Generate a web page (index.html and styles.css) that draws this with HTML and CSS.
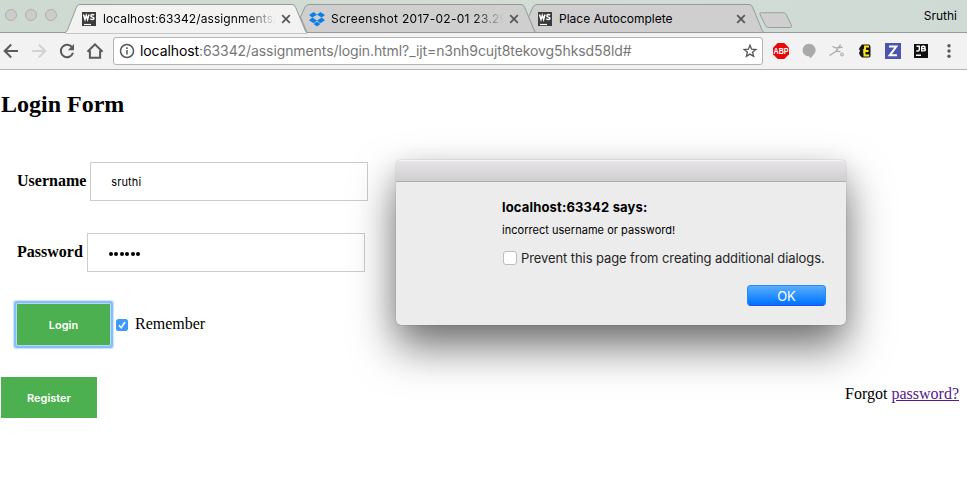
FILE: index.html
```html
<!DOCTYPE html>
<html lang="en">
<head>
<meta charset="utf-8">
<title>Login Form</title>
<link rel="stylesheet" href="styles.css">
</head>
<body>
<div class="window">
  <header class="tabstrip">
    <div class="lights"><i></i><i></i><i></i></div>
    <div class="tabs">
      <div class="tab active">
        <svg class="shape" viewBox="0 0 242 29"><path d="M0 28.5C1.500 28 2 27 2.500 26L11.500 3Q12.500.5 15 .5H227Q229.500.5 230.500 3L240 26Q241 28.500 242 28.500V29H0Z"/></svg>
        <svg class="fav ws" viewBox="0 0 14 14"><rect width="14" height="14" fill="#3b3b3b"/><path d="M1.500 2.500L3 7.500L4.300 3.500L5.600 7.500L7 2.500M12 3.200C10.500 2 8.600 2.700 8.900 4.100C9.200 5.400 12 4.900 11.900 6.400C11.800 7.900 9.600 7.900 8.300 6.800" stroke="#fff" stroke-width="1.500" fill="none"/><path d="M2 12.500h7" stroke="#fff" stroke-width="1.200"/></svg>
        <span class="title t1">localhost:63342/assignments/</span>
        <svg class="close" viewBox="0 0 10 10"><path d="M1.200 1.200L8.800 8.800M8.800 1.200L1.200 8.800"/></svg>
      </div>
      <div class="tab second">
        <svg class="shape" viewBox="0 0 242 29"><path d="M6.500 13L11 3Q12.500.5 15 .5H227Q229.500.5 230.500 3L240 26Q241 28.500 242 28.500H13Z"/></svg>
        <svg class="fav box" viewBox="0 0 16 15"><path fill="#0b7de8" d="M4.700 0L8 2.700L3.300 5.600L0 3ZM11.300 0L16 3L12.700 5.600L8 2.700ZM0 8.300L3.300 5.600L8 8.500L4.700 11.200ZM12.700 5.600L16 8.300L11.300 11.200L8 8.500ZM4.700 12.100L8 9.400L11.300 12.100L8 14.500Z"/></svg>
        <span class="title t2">Screenshot 2017-02-01 23.29</span>
        <svg class="close" viewBox="0 0 10 10"><path d="M1.200 1.200L8.800 8.800M8.800 1.200L1.200 8.800"/></svg>
      </div>
      <div class="tab third">
        <svg class="shape" viewBox="0 0 242 29"><path d="M6.500 13L11 3Q12.500.5 15 .5H227Q229.500.5 230.500 3L240 26Q241 28.500 242 28.500H13Z"/></svg>
        <svg class="fav ws" viewBox="0 0 14 14"><rect width="14" height="14" fill="#3b3b3b"/><path d="M1.500 2.500L3 7.500L4.300 3.500L5.600 7.500L7 2.500M12 3.200C10.500 2 8.600 2.700 8.900 4.100C9.200 5.400 12 4.900 11.900 6.400C11.800 7.900 9.600 7.900 8.300 6.800" stroke="#fff" stroke-width="1.500" fill="none"/><path d="M2 12.500h7" stroke="#fff" stroke-width="1.200"/></svg>
        <span class="title t3">Place Autocomplete</span>
        <svg class="close" viewBox="0 0 10 10"><path d="M1.200 1.200L8.800 8.800M8.800 1.200L1.200 8.800"/></svg>
      </div>
    </div>
    <svg class="newtab" viewBox="0 0 34 17"><path d="M2.500.7H24.500Q26.500.7 27.300 2.500L32.500 13.500Q33.300 15.500 31 15.500H9.500Q7.500 15.500 6.700 13.800L1 2.500Q.4.7 2.500.7Z" fill="#cfcfcf" stroke="#9a9f9c"/></svg>
    <span class="profile">Sruthi</span>
  </header>

  <nav class="toolbar">
    <div class="nav">
      <svg viewBox="0 0 16 16"><path d="M15 8H2.200M8.200 1.500L1.700 8L8.200 14.500"/></svg>
      <svg class="off" viewBox="0 0 16 16"><path d="M1 8H13.800M7.800 1.500L14.300 8L7.800 14.500"/></svg>
      <svg viewBox="0 0 16 16"><path d="M13.300 4.600A6.200 6.200 0 1 0 14 9.800"/><path class="fill" d="M15 1V7.200H8.800Z"/></svg>
      <svg viewBox="0 0 18 16"><path d="M1.500 8.800L9 1.300L16.500 8.800M3.900 7.500V14.800H14.100V7.500"/></svg>
    </div>
    <div class="omnibox">
      <svg class="info" viewBox="0 0 16 16"><circle cx="8" cy="8" r="6.500"/><path d="M8 7v4.500M8 4.200v1.700"/></svg>
      <span class="url"><b>localhost</b>:63342/assignments/login.html?_ijt=n3nh9cujt8tekovg5hksd58ld#</span>
      <svg class="star" viewBox="0 0 14 14"><path d="M7 1.300L8.600 5.200L12.800 5.500L9.600 8.200L10.600 12.300L7 10.100L3.400 12.300L4.400 8.200L1.200 5.500L5.400 5.200Z"/></svg>
    </div>
    <div class="extensions">
      <svg viewBox="0 0 16 16"><path d="M4.700 0H11.300L16 4.700V11.300L11.300 16H4.700L0 11.300V4.700Z" fill="#e60a0a"/><text x="8" y="11.200" text-anchor="middle" textLength="15" lengthAdjust="spacingAndGlyphs" class="abp">ABP</text></svg>
      <svg viewBox="0 0 16 16"><path d="M8 .8A6.600 6.400 0 0 1 14.600 7.300C14.600 11 11 12.500 9.700 15.600L8.300 13.600A6.600 6.400 0 1 1 8 .8Z" fill="#a9a9a9"/></svg>
      <svg viewBox="0 0 16 16"><path d="M3.500 3.500L7.500 5L13.500 4M11.500 1.500L9.700 4.500L6.800 8.500L.5 12.500M7 8.200L11.500 8.600" fill="none" stroke="#aaa" stroke-width="1.300"/><circle cx="13" cy="11.500" r="1.500" fill="#ddd" stroke="#aaa"/></svg>
      <svg viewBox="0 0 16 16"><path d="M5 1.500H12Q13.500 2 13.500 4V13Q13.500 14 12 14.500H5L3 12.500L2 10L3 8L2 6L3 4Z" fill="#161616"/><path d="M12 3.500H8V7H7.200V9.500H7.500V12.500H12.200M8 8H11.500" fill="none" stroke="#fce51c" stroke-width="2"/></svg>
      <svg viewBox="0 0 16 16"><path d="M0 0H16V16H0Z" fill="#4b55ad"/><path d="M4 3.500H11.300L4.700 12.300H12" fill="none" stroke="#fff" stroke-width="2"/></svg>
      <svg viewBox="0 0 16 16"><path d="M1 1H15V15H1Z" fill="#111"/><path d="M3.500 3.200H6.300V6.500Q6.300 8 4.700 8H3.300M8.700 3.200V7.900H11Q12.500 7.800 12.500 6.700T11 5.500H8.700M10.900 5.500Q12.100 5.400 12.100 4.300T10.900 3.200H8.700M3 12.300H8" fill="none" stroke="#fff" stroke-width="1.400"/></svg>
      <svg viewBox="0 0 16 16"><g fill="#5a5a5a"><circle cx="8" cy="2.800" r="1.700"/><circle cx="8" cy="8" r="1.700"/><circle cx="8" cy="13.200" r="1.700"/></g></svg>
    </div>
  </nav>

  <main class="page">
    <h2>Login Form</h2>
    <form class="form">
      <div class="field"><label for="user">Username</label><input id="user" type="text" value="sruthi"></div>
      <div class="field"><label>Password</label><div class="password"><i></i><i></i><i></i><i></i><i></i><i></i></div></div>
      <div class="actions">
        <button type="button" class="login">Login</button>
        <svg class="check" viewBox="0 0 12 12"><rect width="12" height="12" rx="2.500" fill="#3b99fc"/><path d="M3 6.300L5.200 8.700L9 3" fill="none" stroke="#fff" stroke-width="1.600"/></svg>
        <span>Remember</span>
      </div>
    </form>
    <div class="footer">
      <button type="button" class="register">Register</button>
      <span class="forgot">Forgot <a href="#">password?</a></span>
    </div>
  </main>

  <section class="dialog">
    <div class="bar"></div>
    <div class="content">
      <strong class="says">localhost:63342 says:</strong>
      <span class="message">incorrect username or password!</span>
      <div class="prevent"><i></i><span>Prevent this page from creating additional dialogs.</span></div>
      <button type="button" class="ok">OK</button>
    </div>
  </section>
</div>
</body>
</html>
```
FILE: styles.css
```css
* { box-sizing: border-box; }
body { margin: 0; background: #fff; color: #000; font: 16px "Liberation Serif", serif; overflow: hidden; }
svg { display: block; flex: none; overflow: visible; }
button { border: 0; border-radius: 0; padding: 0; }
.window { position: relative; width: 967px; height: 479px; }

.tabstrip, .toolbar, .dialog, button, input { font-family: Inter, "Liberation Sans", sans-serif; }
.tabstrip { display: flex; height: 33px; background: linear-gradient(90deg, #ced9d2, #d3ddd6 50%, #d0dad5); border-bottom: 1px solid #969b98; }
.lights { display: flex; gap: 8px; width: 65px; padding: 9px 0 0 5px; }
.lights i { width: 12px; height: 12px; border: 1px solid #adb0ae; border-radius: 50%; background: #cbcccb; }
.tabs { display: flex; padding-top: 4px; }
.tab { position: relative; display: flex; align-items: center; width: 242px; height: 29px; padding: 1px 17px 0 17px; }
.tab + .tab { margin-left: -13px; }
.active { z-index: 3; padding-right: 16px; }
.second { z-index: 2; padding-left: 15px; }
.tab.third { z-index: 1; margin-left: -14px; padding-left: 16px; padding-right: 18px; }
.shape { position: absolute; inset: 0; width: 242px; height: 29px; z-index: -1; }
.shape path { fill: #cfcfcf; stroke: #969b98; }
.active .shape path { fill: #f2f2f2; }
.active::after { content: ""; position: absolute; left: 1px; right: 1px; bottom: 0; height: 1px; background: #f2f2f2; }
.ws { width: 14px; height: 14px; }
.box { width: 16px; height: 15px; }
.title { flex: 1; min-width: 0; margin: 0 5px 0 7px; overflow: hidden; white-space: nowrap; font-size: 12px; line-height: 18px; }
.second .title { margin-left: 6px; letter-spacing: .28px; }
.t1 { letter-spacing: .08px; }
.t1, .t2 { -webkit-mask-image: linear-gradient(90deg, #000 82%, transparent); mask-image: linear-gradient(90deg, #000 82%, transparent); }
.close { width: 10px; height: 10px; }
.close path { stroke: #555; stroke-width: 1.7; fill: none; }
.newtab { width: 34px; height: 17px; margin: 12px 0 0 -5px; }
.profile { margin: 8px 10px 0 auto; font-size: 12px; line-height: 15px; }

.toolbar { display: flex; align-items: center; height: 37px; background: #f2f2f2; border-bottom: 1px solid #b4b4b4; }
.nav { display: flex; gap: 12px; width: 113px; padding-left: 3px; }
.nav svg { width: 16px; height: 16px; fill: none; stroke: #5a5a5a; stroke-width: 2; }
.nav svg:last-child { width: 18px; margin-left: -1px; }
.nav .off { stroke: #d2d2d2; }
.nav .fill { fill: #5a5a5a; stroke: none; }
.omnibox { display: flex; align-items: center; width: 650px; height: 28px; border: 1px solid #b4b4b4; border-radius: 3px; background: #fff; padding: 0 5px; }
.info { width: 16px; height: 16px; fill: none; stroke: #555; stroke-width: 1.5; }
.url { flex: 1; margin: -1px 0 0 5px; color: #777; font-size: 14px; letter-spacing: -.09px; white-space: nowrap; }
.url b { color: #000; font-weight: 400; }
.star { width: 14px; height: 14px; fill: none; stroke: #555; stroke-width: 1.3; }
.extensions { display: flex; gap: 12px; padding-left: 10px; }
.extensions svg { width: 16px; height: 16px; }
.abp { fill: #fff; font: bold 9px "Liberation Sans", sans-serif; }

.page { padding: 20px 8px 0 1px; }
h2 { margin: 0; font-size: 24px; line-height: 28px; }
.form { display: grid; gap: 32px; padding: 44px 16px 0; }
.field { display: flex; align-items: center; gap: 4px; height: 39px; font-weight: bold; }
.field label { padding-bottom: 2px; }
.field input, .password { width: 278px; height: 39px; margin: 0; padding: 0 20px; border: 1px solid #ccc; background: #fff; font-size: 11px; letter-spacing: .12px; outline: 0; }
.password { display: flex; align-items: center; gap: 1.5px; padding-left: 21px; padding-top: 2px; }
.password i { width: 4px; height: 4px; border-radius: 50%; background: #000; }
.actions { display: flex; align-items: center; height: 41px; }
.actions span { margin-left: 7px; padding-bottom: 2px; }
.login, .register { height: 41px; background: #4caf50; color: #fff; font-size: 11px; font-weight: 600; }
.login { width: 93px; border-radius: 1px; box-shadow: 0 0 0 1px #b5d8f3, 0 0 0 3px #86bdfb, 0 0 1px 4px #cbe1fb; }
.check { width: 12px; height: 12px; margin-left: 6px; }
.footer { display: flex; justify-content: space-between; margin-top: 32px; }
.register { width: 96px; }
.forgot { margin-top: 8px; line-height: 18px; }
.forgot a { color: #551a8b; }

.dialog { position: absolute; z-index: 5; left: 396px; top: 160px; width: 450px; height: 165px; border-radius: 5px; background: #ececec; box-shadow: 0 0 1px rgba(0,0,0,.5), 0 22px 44px rgba(0,0,0,.55), 0 4px 24px rgba(0,0,0,.08); }
.bar { height: 22px; border-radius: 5px 5px 0 0; border-top: 1px solid #f4f4f4; border-bottom: 1px solid #b0aeb1; background: linear-gradient(#e6e4e7, #d0ced1); }
.content { display: flex; flex-direction: column; padding: 16px 20px 0 106px; white-space: nowrap; }
.says { font-size: 13px; line-height: 18px; letter-spacing: .16px; }
.message { margin-top: 6px; font-size: 11px; line-height: 16px; letter-spacing: .03px; }
.prevent { display: flex; align-items: center; margin-top: 11px; font-size: 13px; line-height: 18px; letter-spacing: -.09px; color: #262626; }
.prevent i { flex: none; width: 14px; height: 14px; margin: 0 4px 0 1px; border: 1px solid #bcbcbc; border-radius: 3px; background: #fff; }
.ok { align-self: flex-end; width: 79px; height: 21px; margin-top: 18px; border-radius: 4px; border: 1px solid #2489f3; border-bottom-color: #194ef2; background: linear-gradient(#5aaffb, #087bff 85%, #0870ff); color: #fff; font-size: 13px; line-height: 18px; }
```
